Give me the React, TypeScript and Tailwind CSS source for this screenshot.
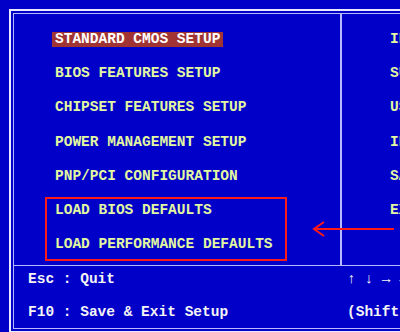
const leftItems = [
  'STANDARD CMOS SETUP',
  'BIOS FEATURES SETUP',
  'CHIPSET FEATURES SETUP',
  'POWER MANAGEMENT SETUP',
  'PNP/PCI CONFIGURATION',
  'LOAD BIOS DEFAULTS',
  'LOAD PERFORMANCE DEFAULTS'
];

const rightItems = [
  'INTEGRATED PERIPHERALS',
  'SUPERVISOR PASSWORD',
  'USER PASSWORD',
  'IDE HDD AUTO DETECTION',
  'SAVE & EXIT SETUP',
  'EXIT WITHOUT SAVING'
];

const MenuRow = ({ label, selected }: { label: string; selected?: boolean }) => {
  return (
    <div className="h-[34.3px] flex items-center whitespace-nowrap">
      {selected ? (
        <span className="bg-[#a03434] text-white px-[3px] leading-[15px] -ml-[3px]">{label}</span>
      ) : (
        <span className="text-[#e2f7a2] leading-[15px]">{label}</span>
      )}
    </div>
  );
};

const AnnotationArrow = () => {
  return (
    <svg className="absolute left-[310px] top-[220px]" width="86" height="18" viewBox="0 0 86 18">
      <path d="M4 9 H84" stroke="#ff1a1a" strokeWidth="2" fill="none" />
      <path d="M14 2 L4 9 L14 16" stroke="#ff1a1a" strokeWidth="2" fill="none" />
    </svg>
  );
};

export default function App() {
  return (
    <div
      className="relative w-[400px] h-[332px] overflow-hidden bg-[#0000c8] pl-[9px] pt-[9px] text-[14.5px] font-bold"
      style={{ fontFamily: '"Liberation Mono", "DejaVu Sans Mono", monospace' }}
    >
      <div className="w-[400px] border-t-2 border-l-2 border-b-2 border-[#e8e8ff] p-[2px]">
        <div className="border-t border-l border-b border-[#b8b8ff]">
          <div className="flex h-[251px]">
            <div className="w-[326px] shrink-0 pl-[41px] pt-[8px]">
              {leftItems.map((item, i) => (
                <MenuRow key={item} label={item} selected={i === 0} />
              ))}
            </div>
            <div className="flex-1 border-l-2 border-[#b8b8ff] pl-[48px] pt-[8px] overflow-hidden">
              {rightItems.map((item) => (
                <MenuRow key={item} label={item} />
              ))}
            </div>
          </div>
          <div className="h-[63px] border-t border-[#b8b8ff] pl-[14px] text-[#f4f4f4]">
            <div className="flex h-[28px] items-center whitespace-nowrap">
              <span className="w-[319px] shrink-0">Esc : Quit</span>
              <span>↑ ↓ → ← : Select Item</span>
            </div>
            <div className="flex h-[38px] items-center whitespace-nowrap">
              <span className="w-[319px] shrink-0">F10 : Save &amp; Exit Setup</span>
              <span>(Shift)F2 : Change Color</span>
            </div>
          </div>
        </div>
      </div>
      <div className="absolute left-[45px] top-[197px] w-[242px] h-[64px] border-2 border-[#ff1a1a]" />
      <AnnotationArrow />
    </div>
  );
}
